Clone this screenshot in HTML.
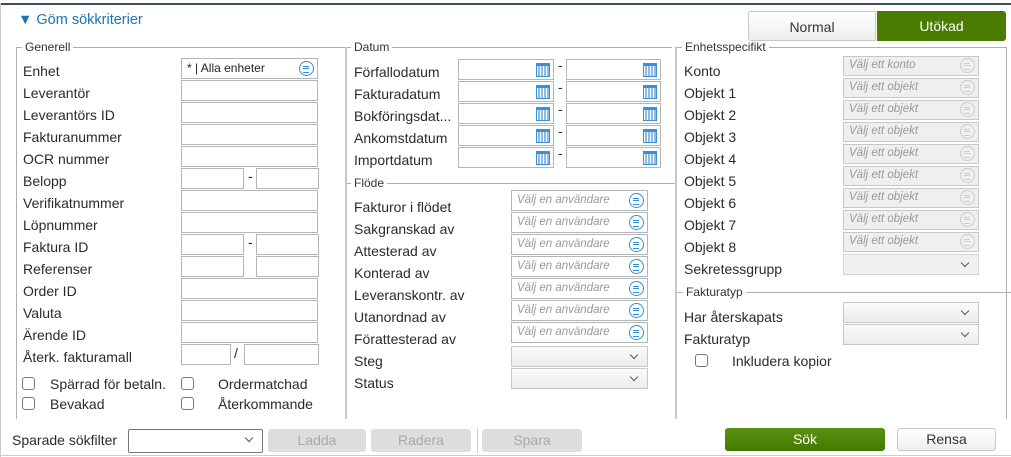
<!DOCTYPE html>
<html><head><meta charset="utf-8"><style>
*{box-sizing:border-box;margin:0;padding:0}
body{width:1011px;height:457px;background:#fff;font-family:"Liberation Sans",sans-serif;font-size:14px;color:#333;position:relative;overflow:hidden}
.a{position:absolute}
.l{position:absolute;white-space:nowrap;line-height:16px;font-size:14px;color:#2b2b2b}
.lg{position:absolute;font-size:12px;color:#333;background:#fff;padding:0 3px;line-height:12px}
.in{position:absolute;height:21px;border:1px solid #b5b5b5;background:#fff}
.dis{background:#efefef;border-color:#c8c8c8}
.ph{position:absolute;left:5px;top:2px;font-size:11.5px;font-style:italic;color:#999;line-height:14px}
.ic{position:absolute;right:3px;top:2px;width:15px;height:15px;border:1.3px solid #2f8fd8;border-radius:50%}
.ic:before{content:"";position:absolute;left:3px;top:3.5px;width:6px;height:5px;border-top:1.2px solid #2f8fd8;border-bottom:1.2px solid #2f8fd8}
.ic:after{content:"";position:absolute;left:3px;top:5.8px;width:6px;border-top:1.2px solid #2f8fd8}
.gi{border-color:#ccc}.gi:before,.gi:after{border-color:#ccc}
.sel{position:absolute;height:21px;border:1px solid #c8c8c8;background:linear-gradient(#fafafa,#ececec)}
.sel:after{content:"";position:absolute;right:10px;top:5px;width:5px;height:5px;border-right:1.4px solid #555;border-bottom:1.4px solid #555;transform:rotate(45deg)}
.cal{position:absolute;right:3px;top:3px;width:14px;height:14px;border:1.5px solid #3a8fd6;border-top-width:3px;background:repeating-linear-gradient(90deg,#fff 0 1px,#8bbbe6 1px 3px)}
.cb{position:absolute;width:13px;height:13px;border:1px solid #777;border-radius:3px;background:#fff}
.btn{position:absolute;height:23px;border-radius:3px;text-align:center;line-height:23px;font-size:14px}
.vl{position:absolute;width:2px;background:#c8c8c8}
.hl{position:absolute;height:1px;background:#b0b0b0}
</style></head><body>
<div class="a" style="left:0;top:3px;width:1011px;height:2px;background:#3d4f5c"></div>
<div class="a" style="left:0;top:3px;width:1px;height:454px;background:#ccc"></div>
<div class="l" style="left:18px;top:12px;color:#1b73b9;font-size:14.5px">▼ Göm sökkriterier</div>
<div class="btn" style="left:748px;top:11px;width:128px;height:30px;line-height:30px;border:1px solid #c8c8c8;background:linear-gradient(#fff,#eee);color:#333;border-radius:3px 0 0 3px">Normal</div>
<div class="btn" style="left:877px;top:11px;width:129px;height:30px;line-height:30px;background:#4a7c01;color:#fff;border-radius:0 3px 3px 0">Utökad</div>

<!-- fieldset lines -->
<div class="hl" style="left:16px;top:47px;width:330px"></div>
<div class="vl" style="left:16px;top:47px;width:1px;height:372px;background:#b0b0b0"></div>
<div class="lg" style="left:22px;top:41px">Generell</div>
<div class="hl" style="left:346px;top:47px;width:326px"></div>
<div class="vl" style="left:345px;top:47px;height:372px"></div>
<div class="lg" style="left:351px;top:41px">Datum</div>
<div class="hl" style="left:346px;top:183px;width:330px"></div>
<div class="lg" style="left:351px;top:177px">Flöde</div>
<div class="vl" style="left:675px;top:47px;height:372px"></div>
<div class="hl" style="left:676px;top:47px;width:330px"></div>
<div class="lg" style="left:682px;top:41px">Enhetsspecifikt</div>
<div class="hl" style="left:677px;top:292px;width:334px"></div>
<div class="lg" style="left:683px;top:286px">Fakturatyp</div>
<div class="vl" style="left:1006px;top:47px;width:1px;height:372px;background:#b0b0b0"></div>

<!-- Generell -->
<div class="l" style="left:23px;top:63px">Enhet</div>
<div class="in" style="left:181px;top:58px;width:137px"><span class="a" style="left:5px;top:2px;font-size:12px;color:#222">* | Alla enheter</span><span class="ic"></span></div>
<div class="l" style="left:23px;top:85px">Leverantör</div><div class="in" style="left:181px;top:80px;width:137px"></div>
<div class="l" style="left:23px;top:107px">Leverantörs ID</div><div class="in" style="left:181px;top:102px;width:137px"></div>
<div class="l" style="left:23px;top:129px">Fakturanummer</div><div class="in" style="left:181px;top:124px;width:137px"></div>
<div class="l" style="left:23px;top:151px">OCR nummer</div><div class="in" style="left:181px;top:146px;width:137px"></div>
<div class="l" style="left:23px;top:173px">Belopp</div><div class="in" style="left:181px;top:168px;width:63px"></div><div class="l" style="left:248px;top:168px">-</div><div class="in" style="left:256px;top:168px;width:63px"></div>
<div class="l" style="left:23px;top:195px">Verifikatnummer</div><div class="in" style="left:181px;top:190px;width:137px"></div>
<div class="l" style="left:23px;top:217px">Löpnummer</div><div class="in" style="left:181px;top:212px;width:137px"></div>
<div class="l" style="left:23px;top:239px">Faktura ID</div><div class="in" style="left:181px;top:234px;width:63px"></div><div class="l" style="left:248px;top:234px">-</div><div class="in" style="left:256px;top:234px;width:63px"></div>
<div class="l" style="left:23px;top:261px">Referenser</div><div class="in" style="left:181px;top:256px;width:63px"></div><div class="in" style="left:256px;top:256px;width:63px"></div>
<div class="l" style="left:23px;top:283px">Order ID</div><div class="in" style="left:181px;top:278px;width:137px"></div>
<div class="l" style="left:23px;top:305px">Valuta</div><div class="in" style="left:181px;top:300px;width:137px"></div>
<div class="l" style="left:23px;top:327px">Ärende ID</div><div class="in" style="left:181px;top:322px;width:137px"></div>
<div class="l" style="left:23px;top:349px">Återk. fakturamall</div><div class="in" style="left:181px;top:344px;width:50px"></div><div class="l" style="left:234px;top:345px">/</div><div class="in" style="left:244px;top:344px;width:75px"></div>
<div class="cb" style="left:22px;top:377px"></div><div class="l" style="left:50px;top:376px">Spärrad för betaln.</div>
<div class="cb" style="left:181px;top:377px"></div><div class="l" style="left:218px;top:376px">Ordermatchad</div>
<div class="cb" style="left:22px;top:397px"></div><div class="l" style="left:50px;top:396px">Bevakad</div>
<div class="cb" style="left:181px;top:397px"></div><div class="l" style="left:218px;top:396px">Återkommande</div>

<!-- Datum -->
<div class="l" style="left:354px;top:64px">Förfallodatum</div>
<div class="l" style="left:354px;top:86px">Fakturadatum</div>
<div class="l" style="left:354px;top:108px">Bokföringsdat...</div>
<div class="l" style="left:354px;top:130px">Ankomstdatum</div>
<div class="l" style="left:354px;top:152px">Importdatum</div>
<div class="in" style="left:458px;top:59px;width:96px"><span class="cal"></span></div><div class="l" style="left:558px;top:57px">-</div><div class="in" style="left:566px;top:59px;width:95px"><span class="cal"></span></div>
<div class="in" style="left:458px;top:81px;width:96px"><span class="cal"></span></div><div class="l" style="left:558px;top:79px">-</div><div class="in" style="left:566px;top:81px;width:95px"><span class="cal"></span></div>
<div class="in" style="left:458px;top:103px;width:96px"><span class="cal"></span></div><div class="l" style="left:558px;top:101px">-</div><div class="in" style="left:566px;top:103px;width:95px"><span class="cal"></span></div>
<div class="in" style="left:458px;top:125px;width:96px"><span class="cal"></span></div><div class="l" style="left:558px;top:123px">-</div><div class="in" style="left:566px;top:125px;width:95px"><span class="cal"></span></div>
<div class="in" style="left:458px;top:147px;width:96px"><span class="cal"></span></div><div class="l" style="left:558px;top:145px">-</div><div class="in" style="left:566px;top:147px;width:95px"><span class="cal"></span></div>

<!-- Flöde -->
<div class="l" style="left:354px;top:199px">Fakturor i flödet</div>
<div class="l" style="left:354px;top:221px">Sakgranskad av</div>
<div class="l" style="left:354px;top:243px">Attesterad av</div>
<div class="l" style="left:354px;top:265px">Konterad av</div>
<div class="l" style="left:354px;top:287px">Leveranskontr. av</div>
<div class="l" style="left:354px;top:309px">Utanordnad av</div>
<div class="l" style="left:354px;top:331px">Förattesterad av</div>
<div class="l" style="left:354px;top:353px">Steg</div>
<div class="l" style="left:354px;top:375px">Status</div>
<div class="in" style="left:511px;top:190px;width:137px"><span class="ph">Välj en användare</span><span class="ic"></span></div>
<div class="in" style="left:511px;top:212px;width:137px"><span class="ph">Välj en användare</span><span class="ic"></span></div>
<div class="in" style="left:511px;top:234px;width:137px"><span class="ph">Välj en användare</span><span class="ic"></span></div>
<div class="in" style="left:511px;top:256px;width:137px"><span class="ph">Välj en användare</span><span class="ic"></span></div>
<div class="in" style="left:511px;top:278px;width:137px"><span class="ph">Välj en användare</span><span class="ic"></span></div>
<div class="in" style="left:511px;top:300px;width:137px"><span class="ph">Välj en användare</span><span class="ic"></span></div>
<div class="in" style="left:511px;top:322px;width:137px"><span class="ph">Välj en användare</span><span class="ic"></span></div>
<div class="sel" style="left:511px;top:346px;width:137px"></div>
<div class="sel" style="left:511px;top:368px;width:137px"></div>

<!-- Enhetsspecifikt -->
<div class="l" style="left:684px;top:63px">Konto</div>
<div class="l" style="left:684px;top:85px">Objekt 1</div>
<div class="l" style="left:684px;top:107px">Objekt 2</div>
<div class="l" style="left:684px;top:129px">Objekt 3</div>
<div class="l" style="left:684px;top:151px">Objekt 4</div>
<div class="l" style="left:684px;top:173px">Objekt 5</div>
<div class="l" style="left:684px;top:195px">Objekt 6</div>
<div class="l" style="left:684px;top:217px">Objekt 7</div>
<div class="l" style="left:684px;top:239px">Objekt 8</div>
<div class="l" style="left:684px;top:261px">Sekretessgrupp</div>
<div class="in dis" style="left:843px;top:56px;width:136px;height:20px"><span class="ph" style="top:1px">Välj ett konto</span><span class="ic gi" style="top:1px"></span></div>
<div class="in dis" style="left:843px;top:78px;width:136px;height:20px"><span class="ph" style="top:1px">Välj ett objekt</span><span class="ic gi" style="top:1px"></span></div>
<div class="in dis" style="left:843px;top:100px;width:136px;height:20px"><span class="ph" style="top:1px">Välj ett objekt</span><span class="ic gi" style="top:1px"></span></div>
<div class="in dis" style="left:843px;top:122px;width:136px;height:20px"><span class="ph" style="top:1px">Välj ett objekt</span><span class="ic gi" style="top:1px"></span></div>
<div class="in dis" style="left:843px;top:144px;width:136px;height:20px"><span class="ph" style="top:1px">Välj ett objekt</span><span class="ic gi" style="top:1px"></span></div>
<div class="in dis" style="left:843px;top:166px;width:136px;height:20px"><span class="ph" style="top:1px">Välj ett objekt</span><span class="ic gi" style="top:1px"></span></div>
<div class="in dis" style="left:843px;top:188px;width:136px;height:20px"><span class="ph" style="top:1px">Välj ett objekt</span><span class="ic gi" style="top:1px"></span></div>
<div class="in dis" style="left:843px;top:210px;width:136px;height:20px"><span class="ph" style="top:1px">Välj ett objekt</span><span class="ic gi" style="top:1px"></span></div>
<div class="in dis" style="left:843px;top:232px;width:136px;height:20px"><span class="ph" style="top:1px">Välj ett objekt</span><span class="ic gi" style="top:1px"></span></div>
<div class="sel" style="left:843px;top:254px;width:136px;background:#f0f0f0;border-color:#d5d5d5"></div>

<!-- Fakturatyp -->
<div class="l" style="left:684px;top:309px">Har återskapats</div>
<div class="l" style="left:684px;top:331px">Fakturatyp</div>
<div class="sel" style="left:843px;top:302px;width:136px"></div>
<div class="sel" style="left:843px;top:324px;width:136px"></div>
<div class="cb" style="left:695px;top:354px"></div><div class="l" style="left:732px;top:353px">Inkludera kopior</div>

<!-- bottom -->
<div class="l" style="left:12px;top:432px">Sparade sökfilter</div>
<div class="sel" style="left:128px;top:429px;width:135px;height:24px;border-color:#777;background:#fff;border-radius:2px"></div>
<div class="btn" style="left:268px;top:429px;width:98px;background:#ddd;color:#aaa">Ladda</div>
<div class="btn" style="left:371px;top:429px;width:100px;background:#ddd;color:#aaa">Radera</div>
<div class="a" style="left:477px;top:428px;width:1px;height:25px;background:#ccc"></div>
<div class="btn" style="left:482px;top:429px;width:100px;background:#ddd;color:#aaa">Spara</div>
<div class="btn" style="left:725px;top:428px;width:160px;background:linear-gradient(#5a9012,#447a00);color:#fff">Sök</div>
<div class="btn" style="left:897px;top:428px;width:99px;border:1px solid #c8c8c8;background:linear-gradient(#fff,#eee);color:#333;line-height:21px">Rensa</div>
<div class="a" style="left:0;top:455px;width:1011px;height:1px;background:#ccc"></div>
</body></html>
